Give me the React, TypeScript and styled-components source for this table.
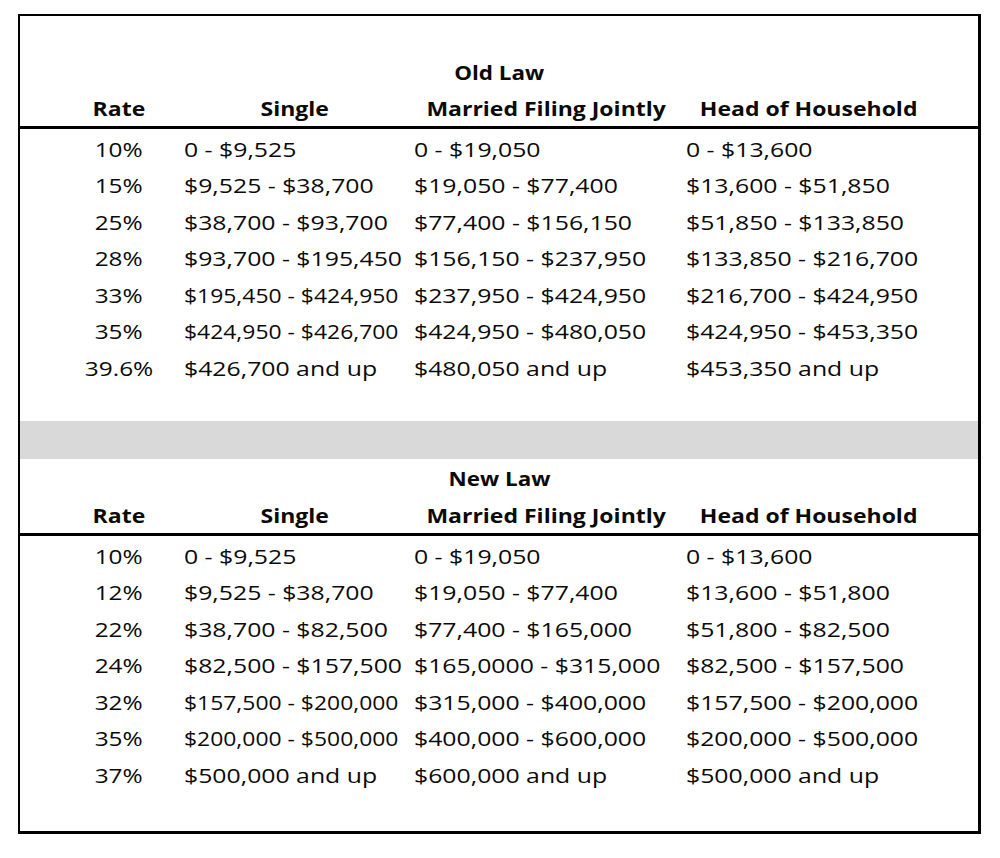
import * as React from "react";
import styled, { createGlobalStyle } from "styled-components";

const GlobalStyle = createGlobalStyle`
  body {
    margin: 0;
    background: #fff;
  }
`;

type Bracket = [string, string, string, string];

const oldLaw: Bracket[] = [
  ["10%", "0 - $9,525", "0 - $19,050", "0 - $13,600"],
  ["15%", "$9,525 - $38,700", "$19,050 - $77,400", "$13,600 - $51,850"],
  ["25%", "$38,700 - $93,700", "$77,400 - $156,150", "$51,850 - $133,850"],
  ["28%", "$93,700 - $195,450", "$156,150 - $237,950", "$133,850 - $216,700"],
  ["33%", "$195,450 - $424,950", "$237,950 - $424,950", "$216,700 - $424,950"],
  ["35%", "$424,950 - $426,700", "$424,950 - $480,050", "$424,950 - $453,350"],
  ["39.6%", "$426,700 and up", "$480,050 and up", "$453,350 and up"],
];

const newLaw: Bracket[] = [
  ["10%", "0 - $9,525", "0 - $19,050", "0 - $13,600"],
  ["12%", "$9,525 - $38,700", "$19,050 - $77,400", "$13,600 - $51,800"],
  ["22%", "$38,700 - $82,500", "$77,400 - $165,000", "$51,800 - $82,500"],
  ["24%", "$82,500 - $157,500", "$165,0000 - $315,000", "$82,500 - $157,500"],
  ["32%", "$157,500 - $200,000", "$315,000 - $400,000", "$157,500 - $200,000"],
  ["35%", "$200,000 - $500,000", "$400,000 - $600,000", "$200,000 - $500,000"],
  ["37%", "$500,000 and up", "$600,000 and up", "$500,000 and up"],
];

// the sheet was captured slightly stretched sideways, so text is widened to match
const Sheet = styled.div`
  margin: 14px 0 0 18px;
  width: 963px;
  box-sizing: border-box;
  border: 2px solid #000;
  border-right-width: 3px;
  border-bottom-width: 3px;
  background: #fff;
  color: #0a0a0a;
  font-family: "Open Sans", "Noto Sans", sans-serif;
  font-size: 20px;
`;

const Section = styled.section<{ $top: number; $bottom: number }>`
  padding-top: ${(p) => p.$top}px;
  padding-bottom: ${(p) => p.$bottom}px;
`;

const Title = styled.div`
  height: 36.5px;
  line-height: 36.5px;
  text-align: center;
  font-weight: 700;
`;

const Grid = styled.div`
  display: grid;
  grid-template-columns: 38px 122px 230px 272px 254px 1fr;
  white-space: nowrap;
`;

const HeaderRow = styled(Grid)`
  height: 35px;
  line-height: 35px;
  font-weight: 700;
  border-bottom: 3px solid #000;
  margin-bottom: 3px;
`;

const BodyRow = styled(Grid)`
  height: 36.45px;
  line-height: 36.45px;
`;

const Cell = styled.div<{ $col: number; $center?: boolean }>`
  grid-column: ${(p) => p.$col};
  text-align: ${(p) => (p.$center ? "center" : "left")};
  padding-left: ${(p) => (p.$center ? 0 : 4)}px;
`;

const Text = styled.span<{ $scale: number; $center?: boolean }>`
  display: inline-block;
  transform: scaleX(${(p) => p.$scale});
  transform-origin: ${(p) => (p.$center ? "center" : "left")} center;
`;

const Band = styled.div`
  height: 38px;
  background: #d9d9d9;
`;

const headings = ["Rate", "Single", "Married Filing Jointly", "Head of Household"];

// long ranges in the narrow Single column are squeezed to fit, as in the sheet
const valueScale = (col: number, v: string) => (col === 0 && v.length > 18 ? 1.145 : 1.24);

const BracketTable = ({
  title,
  rows,
  top,
  bottom,
}: {
  title: string;
  rows: Bracket[];
  top: number;
  bottom: number;
}) => (
  <Section $top={top} $bottom={bottom}>
    <Title>
      <Text $scale={1.12} $center>
        {title}
      </Text>
    </Title>
    <HeaderRow>
      {headings.map((h, i) => (
        <Cell key={h} $col={i + 2} $center>
          <Text $scale={1.15} $center>
            {h}
          </Text>
        </Cell>
      ))}
    </HeaderRow>
    {rows.map((r) => (
      <BodyRow key={r[0]}>
        <Cell $col={2} $center>
          <Text $scale={1.22} $center>
            {r[0]}
          </Text>
        </Cell>
        {r.slice(1).map((v, i) => (
          <Cell key={i} $col={i + 3}>
            <Text $scale={valueScale(i, v)}>{v}</Text>
          </Cell>
        ))}
      </BodyRow>
    ))}
  </Section>
);

export default function App() {
  return (
    <>
      <GlobalStyle />
      <Sheet>
        <BracketTable title="Old Law" rows={oldLaw} top={38.5} bottom={33.9} />
        <Band />
        <BracketTable title="New Law" rows={newLaw} top={2.5} bottom={36.9} />
      </Sheet>
    </>
  );
}
